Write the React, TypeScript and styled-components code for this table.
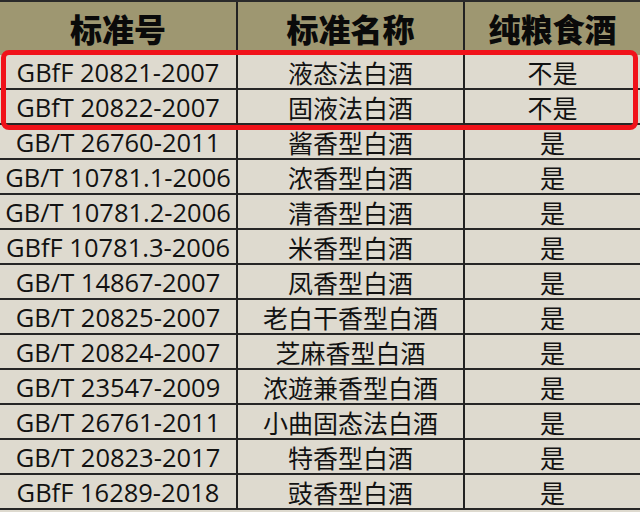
import React from 'react';
import styled, { createGlobalStyle } from 'styled-components';

interface IRow {
    code: string;
    name: string;
    pure: string;
}

const rows: IRow[] = [
    { code: 'GBfF 20821-2007', name: '液态法白酒', pure: '不是' },
    { code: 'GBfT 20822-2007', name: '固液法白酒', pure: '不是' },
    { code: 'GB/T 26760-2011', name: '酱香型白酒', pure: '是' },
    { code: 'GB/T 10781.1-2006', name: '浓香型白酒', pure: '是' },
    { code: 'GB/T 10781.2-2006', name: '清香型白酒', pure: '是' },
    { code: 'GBfF 10781.3-2006', name: '米香型白酒', pure: '是' },
    { code: 'GB/T 14867-2007', name: '凤香型白酒', pure: '是' },
    { code: 'GB/T 20825-2007', name: '老白干香型白酒', pure: '是' },
    { code: 'GB/T 20824-2007', name: '芝麻香型白酒', pure: '是' },
    { code: 'GB/T 23547-2009', name: '浓遊兼香型白酒', pure: '是' },
    { code: 'GB/T 26761-2011', name: '小曲固态法白酒', pure: '是' },
    { code: 'GB/T 20823-2017', name: '特香型白酒', pure: '是' },
    { code: 'GBfF 16289-2018', name: '豉香型白酒', pure: '是' },
];

const GlobalStyle = createGlobalStyle`
body {
    margin: 0;
    background: #dedacf;
    font-family: "Open Sans", "Noto Sans CJK SC", sans-serif;
    color: #111;
}
`;

const App = () => {
    return (
        <>
            <GlobalStyle />
            <Wrapper>
                <Table>
                    <HeadCell>标准号</HeadCell>
                    <HeadCell>标准名称</HeadCell>
                    <HeadCell $last>纯粮食酒</HeadCell>
                    {rows.map((row) => (
                        <React.Fragment key={row.code + row.name}>
                            <Cell>{row.code}</Cell>
                            <Cell $cjk>{row.name}</Cell>
                            <Cell $cjk $last>{row.pure}</Cell>
                        </React.Fragment>
                    ))}
                </Table>
                <Highlight />
            </Wrapper>
        </>
    );
};

const Wrapper = styled.div`
position: relative;
width: 640px;
height: 512px;
overflow: hidden;
`;

const Table = styled.div`
display: grid;
grid-template-columns: 238px 227px 1fr;
grid-template-rows: 53px repeat(13, 35px);
border-top: 2px solid #2a2a2a;
`;

const HeadCell = styled.div<{ $last?: boolean }>`
display: flex;
align-items: center;
justify-content: center;
background: #9e9771;
border-right: ${(p) => (p.$last ? 'none' : '2px solid #222')};
font-family: "Noto Sans CJK SC", sans-serif;
font-weight: 900;
font-size: 32px;
color: #0a0a0a;
padding-bottom: 2px;
`;

const Cell = styled.div<{ $last?: boolean; $cjk?: boolean }>`
display: flex;
align-items: center;
justify-content: center;
background: #dedacf;
border-right: ${(p) => (p.$last ? 'none' : '2px solid #222')};
border-bottom: 2px solid #262626;
font-size: ${(p) => (p.$cjk ? '25px' : '25.5px')};
white-space: nowrap;
color: #121212;
`;

const Highlight = styled.div`
position: absolute;
left: 1px;
top: 50px;
width: 627px;
height: 70px;
border: 5px solid #f0121a;
border-radius: 8px;
`;

export default App;
